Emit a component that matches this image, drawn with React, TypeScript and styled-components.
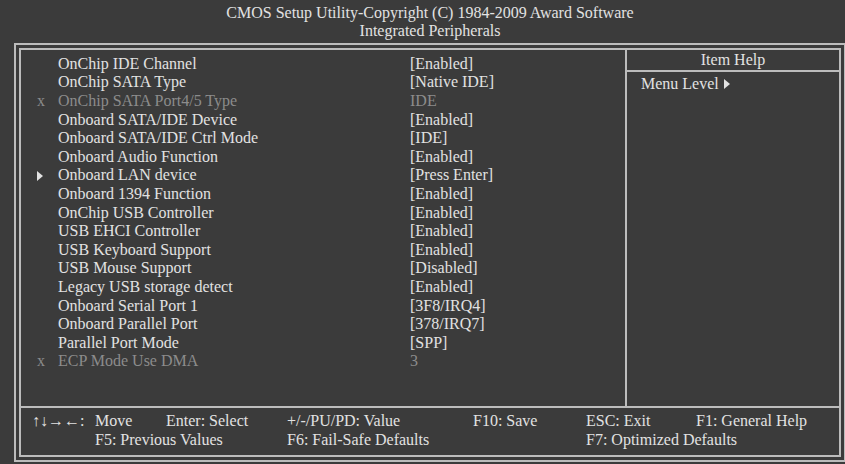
import styled, { createGlobalStyle } from 'styled-components';

const GlobalStyle = createGlobalStyle`
  html, body {
    margin: 0;
    padding: 0;
    background-color: #3b3b3b;
    overflow: hidden;
  }
`;

const Screen = styled.div`
  width: 845px;
  height: 464px;
  padding: 4px 0 0 14px;
  box-sizing: border-box;
  font-family: 'Liberation Serif', 'Times New Roman', serif;
  font-size: 16px;
  color: #e2e2e2;
  background-color: #3b3b3b;
`;

const Header = styled.header`
  width: 832px;
  text-align: center;
  line-height: 18.4px;
`;

const OuterFrame = styled.div`
  width: 832px;
  height: 419px;
  margin-top: 2px;
  padding: 3px;
  box-sizing: border-box;
  border: 2px solid #bcbcbc;
`;

const InnerFrame = styled.div`
  height: 100%;
  box-sizing: border-box;
  border: 2px solid #bcbcbc;
  display: grid;
  grid-template-rows: 358px 1fr;
`;

const Body = styled.div`
  display: grid;
  grid-template-columns: 604px 1fr;
  border-bottom: 2px solid #bcbcbc;
`;

const List = styled.div`
  padding-top: 5px;
`;

const Row = styled.div<{ $dim?: boolean }>`
  display: grid;
  grid-template-columns: 21px 352px 1fr;
  padding-left: 16px;
  height: 18.6px;
  line-height: 18.6px;
  white-space: nowrap;
  color: ${(p) => (p.$dim ? '#8c8c8c' : '#e2e2e2')};
`;

const Marker = styled.span`
  display: flex;
  align-items: center;
`;

const HelpPanel = styled.div`
  border-left: 2px solid #bcbcbc;
  display: flex;
  flex-direction: column;
`;

const HelpTitle = styled.div`
  height: 20px;
  line-height: 19px;
  text-align: center;
  border-bottom: 2px solid #bcbcbc;
`;

const HelpBody = styled.div`
  padding: 3px 0 0 14px;
  line-height: 18.6px;
  display: flex;
  align-items: center;
  gap: 5px;
`;

const Footer = styled.div`
  padding: 3px 0 0 11px;
  display: grid;
  grid-template-columns: 63px 71px 121px 186px 113px 110px 1fr;
  grid-auto-rows: 19px;
  line-height: 19px;
  white-space: nowrap;
`;

const Key = styled.span<{ $span?: number }>`
  grid-column: span ${(p) => p.$span ?? 1};
`;

const Arrow = () => (
  <svg width="6" height="10" viewBox="0 0 6 10">
    <polygon points="0,0 6,5 0,10" fill="#e2e2e2" />
  </svg>
);

type Item = { label: string; value: string; mark?: 'x' | 'sub' };

const items: Item[] = [
  { label: 'OnChip IDE Channel', value: '[Enabled]' },
  { label: 'OnChip SATA Type', value: '[Native IDE]' },
  { label: 'OnChip SATA Port4/5 Type', value: 'IDE', mark: 'x' },
  { label: 'Onboard SATA/IDE Device', value: '[Enabled]' },
  { label: 'Onboard SATA/IDE Ctrl Mode', value: '[IDE]' },
  { label: 'Onboard Audio Function', value: '[Enabled]' },
  { label: 'Onboard LAN device', value: '[Press Enter]', mark: 'sub' },
  { label: 'Onboard 1394 Function', value: '[Enabled]' },
  { label: 'OnChip USB Controller', value: '[Enabled]' },
  { label: 'USB EHCI Controller', value: '[Enabled]' },
  { label: 'USB Keyboard Support', value: '[Enabled]' },
  { label: 'USB Mouse Support', value: '[Disabled]' },
  { label: 'Legacy USB storage detect', value: '[Enabled]' },
  { label: 'Onboard Serial Port 1', value: '[3F8/IRQ4]' },
  { label: 'Onboard Parallel Port', value: '[378/IRQ7]' },
  { label: 'Parallel Port Mode', value: '[SPP]' },
  { label: 'ECP Mode Use DMA', value: '3', mark: 'x' },
];

const App = () => (
  <>
    <GlobalStyle />
    <Screen>
      <Header>
        <div>CMOS Setup Utility-Copyright (C) 1984-2009 Award Software</div>
        <div>Integrated Peripherals</div>
      </Header>
      <OuterFrame>
        <InnerFrame>
          <Body>
            <List>
              {items.map((it) => (
                <Row key={it.label} $dim={it.mark === 'x'}>
                  <Marker>{it.mark === 'x' ? 'x' : it.mark === 'sub' ? <Arrow /> : null}</Marker>
                  <span>{it.label}</span>
                  <span>{it.value}</span>
                </Row>
              ))}
            </List>
            <HelpPanel>
              <HelpTitle>Item Help</HelpTitle>
              <HelpBody>
                Menu Level <Arrow />
              </HelpBody>
            </HelpPanel>
          </Body>
          <Footer>
            <Key>↑↓→←:</Key>
            <Key>Move</Key>
            <Key>Enter: Select</Key>
            <Key>+/-/PU/PD: Value</Key>
            <Key>F10: Save</Key>
            <Key>ESC: Exit</Key>
            <Key>F1: General Help</Key>
            <Key />
            <Key $span={2}>F5: Previous Values</Key>
            <Key $span={2}>F6: Fail-Safe Defaults</Key>
            <Key $span={2}>F7: Optimized Defaults</Key>
          </Footer>
        </InnerFrame>
      </OuterFrame>
    </Screen>
  </>
);

export default App;
